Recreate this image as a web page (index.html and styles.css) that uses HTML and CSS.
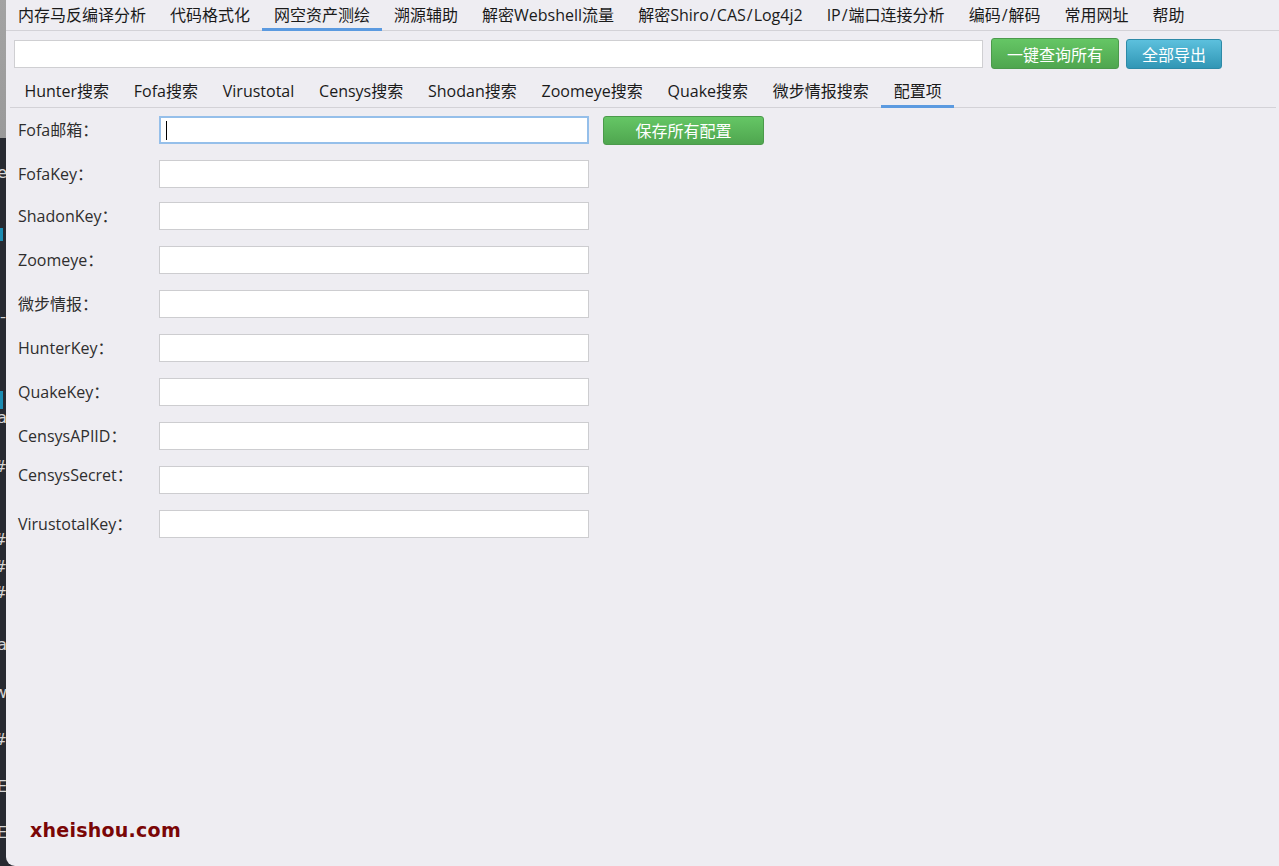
FILE: index.html
```html
<!DOCTYPE html>
<html lang="zh-CN">
<head>
<meta charset="utf-8">
<title>网空资产测绘 - 配置项</title>
<link rel="stylesheet" href="styles.css">
</head>
<body>
<div class="desktop">
  <div class="strip">
    <span class="frag f1">e</span>
    <span class="bar b1"></span>
    <span class="frag f2">¯</span>
    <span class="bar b2"></span>
    <span class="frag f3">a</span>
    <span class="frag f4">#</span>
    <span class="frag f5">#</span>
    <span class="frag f6">#</span>
    <span class="frag f7">#</span>
    <span class="frag f8">a</span>
    <span class="frag f9">w</span>
    <span class="frag f10">#</span>
    <span class="frag f11">E</span>
    <span class="frag f12">E</span>
  </div>
  <div class="window">
    <nav class="menu">
      <span class="menu-item">内存马反编译分析</span>
      <span class="menu-item">代码格式化</span>
      <span class="menu-item active">网空资产测绘</span>
      <span class="menu-item">溯源辅助</span>
      <span class="menu-item">解密Webshell流量</span>
      <span class="menu-item">解密Shiro<span class="sl">/</span>CAS<span class="sl">/</span>Log4j2</span>
      <span class="menu-item">IP<span class="sl">/</span>端口连接分析</span>
      <span class="menu-item">编码<span class="sl">/</span>解码</span>
      <span class="menu-item">常用网址</span>
      <span class="menu-item">帮助</span>
    </nav>
    <div class="searchbar">
      <div class="search-input"></div>
      <button class="btn btn-green btn-query">一键查询所有</button>
      <button class="btn btn-blue btn-export">全部导出</button>
    </div>
    <nav class="tabs">
      <span class="tab">Hunter搜索</span>
      <span class="tab">Fofa搜索</span>
      <span class="tab">Virustotal</span>
      <span class="tab">Censys搜索</span>
      <span class="tab">Shodan搜索</span>
      <span class="tab">Zoomeye搜索</span>
      <span class="tab">Quake搜索</span>
      <span class="tab">微步情报搜索</span>
      <span class="tab active">配置项</span>
    </nav>
    <div class="config">
      <div class="row">
        <span class="label">Fofa邮箱：</span>
        <div class="field focused"><span class="caret"></span></div>
        <button class="btn btn-green btn-save">保存所有配置</button>
      </div>
      <div class="row tight">
        <span class="label">FofaKey：</span>
        <div class="field"></div>
      </div>
      <div class="row">
        <span class="label">ShadonKey：</span>
        <div class="field"></div>
      </div>
      <div class="row">
        <span class="label">Zoomeye：</span>
        <div class="field"></div>
      </div>
      <div class="row">
        <span class="label">微步情报：</span>
        <div class="field"></div>
      </div>
      <div class="row">
        <span class="label">HunterKey：</span>
        <div class="field"></div>
      </div>
      <div class="row">
        <span class="label">QuakeKey：</span>
        <div class="field"></div>
      </div>
      <div class="row">
        <span class="label">CensysAPIID：</span>
        <div class="field"></div>
      </div>
      <div class="row">
        <span class="label raised">CensysSecret：</span>
        <div class="field"></div>
      </div>
      <div class="row">
        <span class="label">VirustotalKey：</span>
        <div class="field"></div>
      </div>
    </div>
    <div class="watermark">xheishou.com</div>
  </div>
</div>
</body>
</html>
```
FILE: styles.css
```css
html, body {
  margin: 0;
  padding: 0;
  height: 100%;
}
body {
  background: #272a31;
  overflow: hidden;
  font-family: "Open Sans", "Noto Sans CJK SC", sans-serif;
}
.desktop {
  display: flex;
  height: 866px;
}
.strip {
  width: 6px;
  flex: none;
  position: relative;
  overflow: hidden;
  background: linear-gradient(#a3a3a3 0, #9a9a9a 138px, #272a31 138px);
}
.frag {
  position: absolute;
  right: -1px;
  font-family: "DejaVu Sans", sans-serif;
  font-size: 16px;
  line-height: 16px;
  color: #d6d6d6;
}
.f1 { top: 165px; }
.f2 { top: 316px; }
.f3 { top: 410px; }
.f4 { top: 459px; }
.f5 { top: 532px; }
.f6 { top: 559px; }
.f7 { top: 585px; }
.f8 { top: 637px; }
.f9 { top: 685px; }
.f10 { top: 732px; }
.f11 { top: 779px; }
.f12 { top: 825px; }
.bar {
  position: absolute;
  left: 0;
  width: 3px;
  background: #1b8db3;
}
.b1 { top: 228px; height: 13px; }
.b2 { top: 391px; height: 18px; }

.window {
  flex: 1;
  background: #eeedf2;
  border-bottom-left-radius: 9px;
  display: flex;
  flex-direction: column;
  overflow: hidden;
}

/* top menu */
.menu {
  display: flex;
  height: 30px;
  border-bottom: 1px solid #d3d2d7;
}
.menu-item {
  padding: 0 12px;
  height: 28px;
  line-height: 30px;
  font-size: 16px;
  color: #1a1a1a;
  border-bottom: 3px solid transparent;
  white-space: nowrap;
}
.menu-item.active {
  border-bottom-color: #5b9ae0;
}
.sl {
  margin: 0 1px;
}

/* search bar */
.searchbar {
  display: flex;
  align-items: center;
  height: 31px;
  padding: 7px 0 0 8px;
}
.search-input {
  width: 969px;
  height: 28px;
  box-sizing: border-box;
  background: #fff;
  border: 1px solid #cfcfd2;
  margin-right: 8px;
}
.btn {
  font-family: "Noto Sans CJK SC", sans-serif;
  font-size: 16px;
  color: #fff;
  border-radius: 3px;
  padding: 0;
  box-sizing: border-box;
  cursor: pointer;
}
.btn-green {
  background: linear-gradient(#65c665, #4fa64f);
  border: 1px solid #4b9a4b;
}
.btn-blue {
  background: linear-gradient(#5cc0dd, #3196b5);
  border: 1px solid #2d8aa7;
}
.btn-query {
  width: 128px;
  height: 31px;
  margin-right: 7px;
}
.btn-export {
  width: 96px;
  height: 30px;
}

/* sub tabs */
.tabs {
  display: flex;
  height: 38px;
  margin: 0 3px 0 4px;
  padding-left: 2px;
  border-bottom: 1px solid #d3d2d7;
}
.tab {
  padding: 8px 12.4px 0;
  height: 28px;
  line-height: 29px;
  font-size: 16px;
  color: #1a1a1a;
  border-bottom: 3px solid transparent;
  white-space: nowrap;
}
.tab.active {
  border-bottom-color: #5b9ae0;
}

/* config form */
.config {
  display: flex;
  flex-direction: column;
  gap: 16px;
  padding: 8px 0 0 12px;
}
.row {
  display: flex;
  align-items: center;
  height: 28px;
}
.row.tight {
  margin-bottom: -2px;
}
.label {
  width: 141px;
  font-size: 16px;
  line-height: 20px;
  color: #2e2e2e;
  white-space: nowrap;
}
.label.raised {
  margin-top: -10px;
}
.field {
  width: 430px;
  height: 28px;
  box-sizing: border-box;
  background: #fff;
  border: 1px solid #cdcdd0;
  display: flex;
  align-items: center;
}
.field.focused {
  border: 2px solid #95bfea;
  padding-left: 5px;
}
.caret {
  width: 1px;
  height: 19px;
  background: #000;
}
.btn-save {
  width: 161px;
  height: 29px;
  margin-left: 14px;
}

.watermark {
  margin-top: auto;
  margin-bottom: 26px;
  padding-left: 24px;
  font-family: "DejaVu Sans", sans-serif;
  font-weight: bold;
  font-size: 19px;
  letter-spacing: 0.25px;
  line-height: 20px;
  color: #7a0606;
}
```
